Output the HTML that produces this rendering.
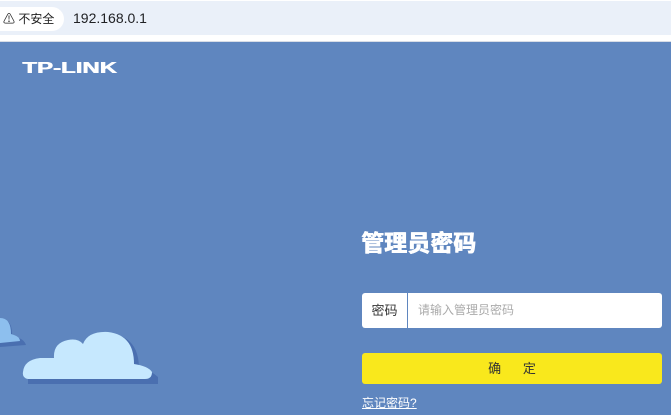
<!DOCTYPE html>
<html><head><meta charset="utf-8"><style>
*{margin:0;padding:0;box-sizing:border-box}
body{width:671px;height:415px;overflow:hidden;background:#fff;font-family:"Liberation Sans","Noto Sans CJK SC",sans-serif;position:relative}
.bar{position:absolute;left:0;top:1px;width:671px;height:34px;background:#eaf0f9}
.pill{position:absolute;left:0;top:6px;height:24px;width:64px;background:#fff;border-radius:0 12px 12px 0;font-size:12px;color:#222;line-height:24px;padding-left:3px}
.url{position:absolute;left:73px;top:9px;font-size:14px;color:#202124}
.line{position:absolute;left:0;top:41px;width:671px;height:1px;background:#d8dde6}
.main{position:absolute;left:0;top:42px;width:671px;height:373px;background:#5f86bf}
.logo{position:absolute;left:22px;top:18px;color:#fff;font-weight:bold;font-size:16px;font-family:"Liberation Sans",sans-serif;transform:scaleX(1.5);transform-origin:left;text-shadow:0.6px 0 0 #fff}
h1{position:absolute;left:361px;top:182px;color:#fff;font-size:23px;font-weight:900;font-family:"Noto Sans CJK SC",sans-serif;text-shadow:0.5px 0 0 #fff}
.inp{position:absolute;left:362px;top:251px;width:300px;height:35px;background:#fff;border-radius:3px}
.inp .l{position:absolute;left:0;top:0;width:46px;height:35px;border-right:1px solid #5f86bf;font-size:13px;color:#333;text-align:center;line-height:35px}
.inp .p{position:absolute;left:56px;top:0;line-height:35px;font-size:12px;color:#aaa}
.btn{position:absolute;left:362px;top:311px;width:300px;height:31px;background:#f9e81c;border-radius:3px;text-align:center;line-height:31px;font-size:13px;color:#333}
.fg{position:absolute;left:362px;top:352px;color:#fff;font-size:12px;text-decoration:underline}
</style></head><body>
<div class="bar"><div class="pill">⚠ 不安全</div><div class="url">192.168.0.1</div></div>
<div class="line"></div>
<div class="main">
<div class="logo">TP-LINK</div>
<svg width="200" height="373" style="position:absolute;left:0;top:0">
<path d="M0 278 Q13 276 12 295 L16 295 Q24 297 26 303 L0 305Z" fill="#4a6fb0"/>
<path d="M0 276 Q11 276 11 292 L14 293 Q20 295 20 299 L0 301Z" fill="#8dbfee"/>
<path d="M28 335 Q26 322 42 320 L56 320 Q56 304 72 302 Q82 300 86 307 Q90 292 110 292 Q138 294 139 325 Q150 328 158 335 L158 342 L28 342Z" fill="#4a6fb0"/>
<path d="M23 330 Q24 318 40 316 L54 316 Q53 301 68 298 Q78 296 83 302 Q88 289 108 290 Q134 293 134 322 Q148 324 152 330 Q152 337 145 337 L28 337 Q22 336 23 330Z" fill="#c6e8fe"/>
</svg>
<h1>管理员密码</h1>
<div class="inp"><div class="l">密码</div><div class="p">请输入管理员密码</div></div>
<div class="btn">确&nbsp;&nbsp;&nbsp;&nbsp;&nbsp;&nbsp;定</div>
<div class="fg">忘记密码?</div>
</div>
</body></html>
